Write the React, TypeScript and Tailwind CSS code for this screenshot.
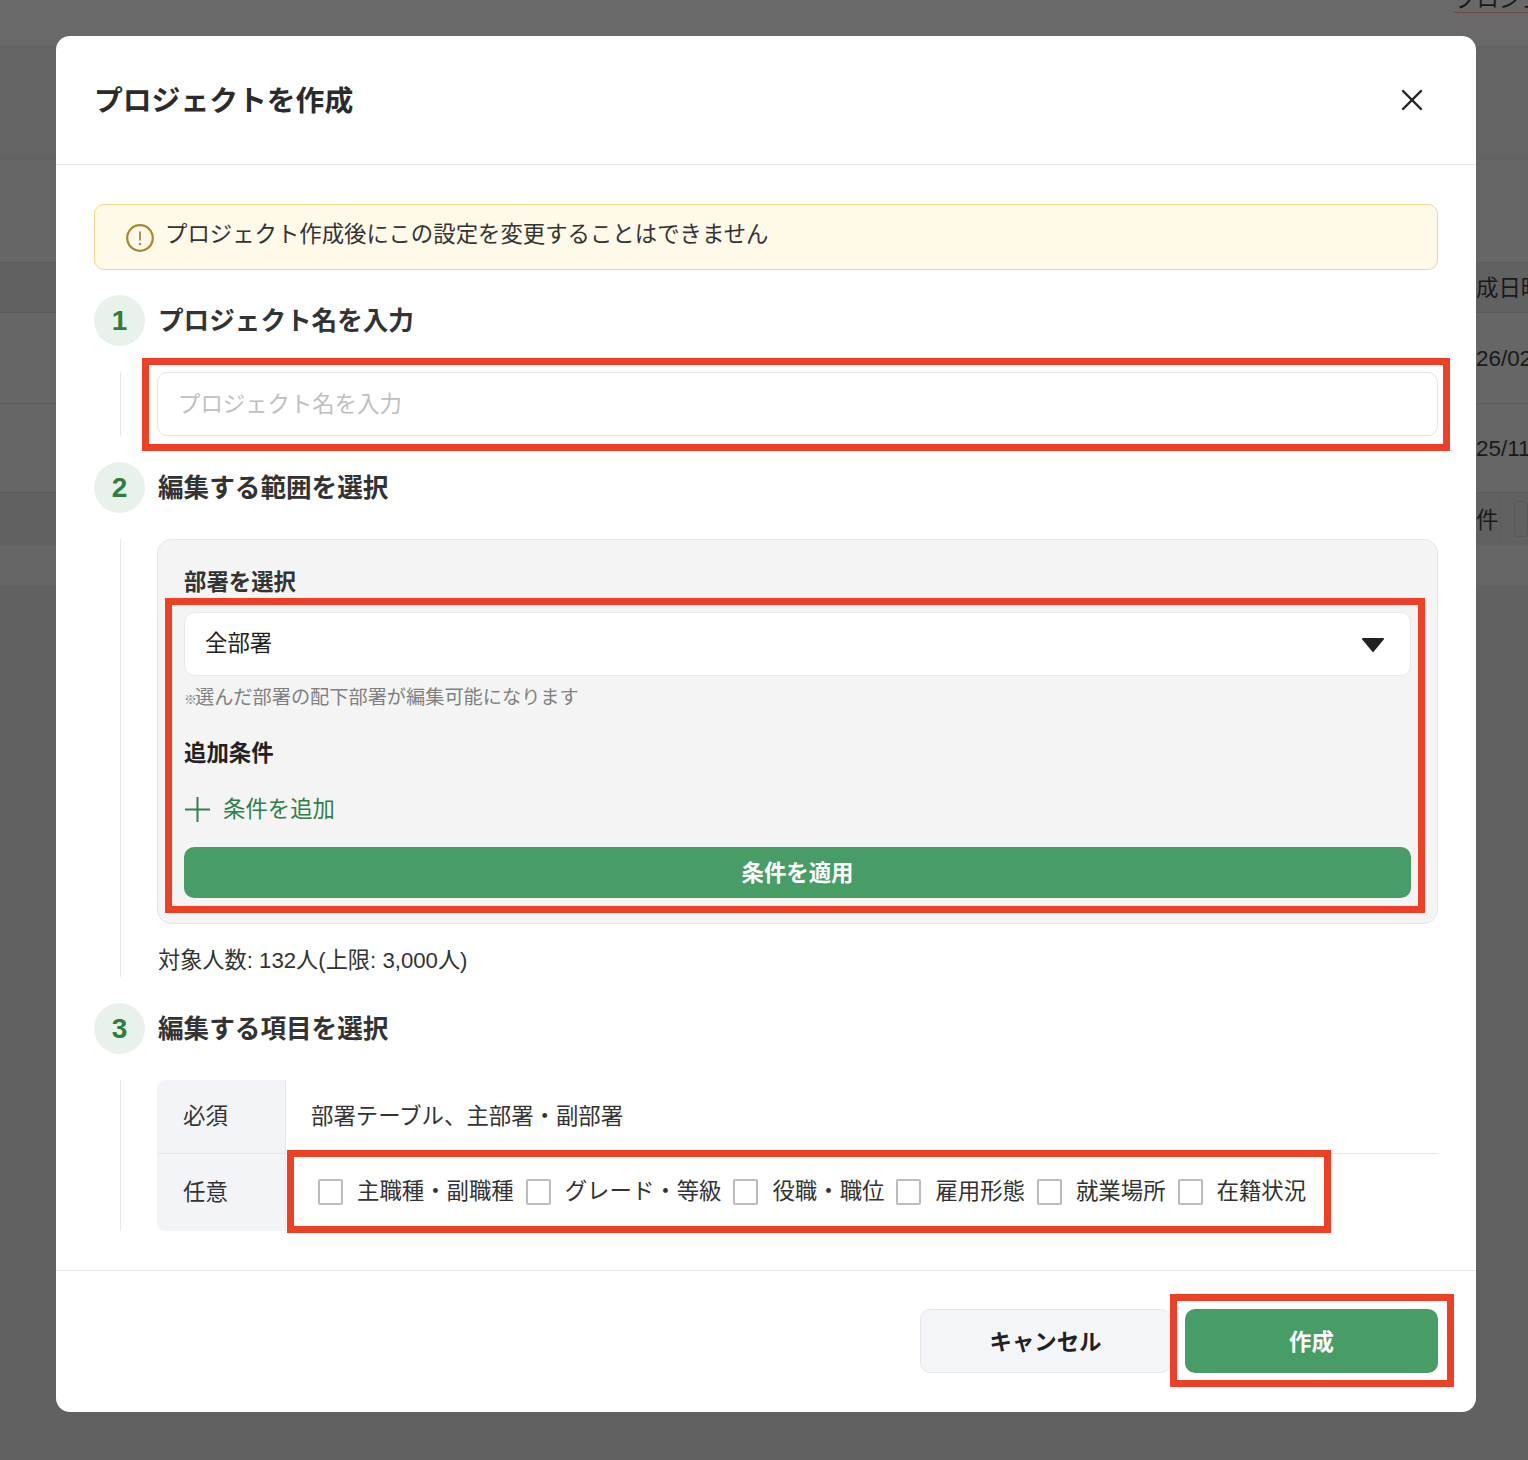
import React from "react";
import { X } from "lucide-react";

const Step = ({ n, title }: { n: number; title: string }) => (
	<div className="flex items-center gap-[13px]">
		<div className="w-[51px] h-[51px] rounded-full bg-[#e8f2ea] flex items-center justify-center text-[#2f7d3b] text-[28px] font-bold">
			{n}
		</div>
		<h2 className="text-[25.6px] leading-[34px] font-bold text-[#333333]">{title}</h2>
	</div>
);

const Check = ({ label }: { label: string }) => (
	<label className="flex items-center gap-[14px]">
		<span className="w-[25px] h-[26px] rounded-[2px] border-2 border-[#bcbcc0] bg-white" />
		<span>{label}</span>
	</label>
);

const Redbox = ({ className }: { className: string }) => (
	<div className={"absolute border-[7px] border-[#ee4027] pointer-events-none " + className} />
);

const App = () => {
	return (
		<div className="relative w-[1528px] h-[1460px] overflow-hidden bg-[#616161] text-[#333333] font-['Liberation_Sans','Noto_Sans_CJK_JP',sans-serif]">
			{/* page behind the overlay */}
			<div className="flex flex-col text-[22.4px] text-[#1a1a1a]">
				<div className="h-[47px] bg-[#696969] border-b border-[#616161] flex justify-end">
					<span className="w-[74px] h-[13px] border-b border-[#6b4a40] overflow-hidden leading-[0px] whitespace-nowrap">プロジェクト</span>
				</div>
				<div className="h-[113px] bg-[#646464] border-b border-[#616161]" />
				<div className="h-[103px] bg-[#666666] border-b border-[#5d5d5d]" />
				<div className="h-[50px] bg-[#616161] border-b border-[#5b5b5b] flex items-center pl-[1476px] pt-[2px] whitespace-nowrap">成日時</div>
				<div className="h-[91px] bg-[#666666] border-b border-[#5b5b5b] flex items-center pl-[1476px] pt-[2px]">26/02</div>
				<div className="h-[89px] bg-[#666666] border-b border-[#5b5b5b] flex items-center pl-[1476px] pt-[2px]">25/11</div>
				<div className="h-[52px] bg-[#616161] flex items-center pl-[1476px]">
					<span className="w-[35px] border-r border-[#5b5b5b] h-[44px] pt-[3px] flex items-center">件</span>
					<span className="ml-[13px] w-[20px] h-[36px] rounded-[4px] border border-[#585858]" />
				</div>
				<div className="h-[40px] bg-[#666666]" />
			</div>

			{/* modal */}
			<div className="absolute left-[56px] top-[36px] w-[1420px] h-[1376px] bg-white rounded-[14px] flex flex-col">
				<div className="h-[129px] shrink-0 border-b border-[#e6e7ea] flex items-center justify-between pl-[38px] pr-[46px]">
					<h1 className="text-[28.8px] font-bold text-[#2b2b2b] pt-[3px]">プロジェクトを作成</h1>
					<X size={36} strokeWidth={1.6} className="text-[#222222]" />
				</div>

				<div className="flex-1 px-[38px] pt-[39px] flex flex-col">
					<div className="h-[66px] rounded-[10px] border border-[#f0d98a] bg-[#fef9e9] flex items-center gap-[11px] pl-[31px]">
						<svg width="28" height="28" viewBox="0 0 28 28" className="mt-[2px]">
							<circle cx="14" cy="14" r="12.8" fill="none" stroke="#a5892c" strokeWidth="2.2" />
							<path d="M14 7.5v9" stroke="#a5892c" strokeWidth="1.8" />
							<circle cx="14" cy="20" r="1.2" fill="#a5892c" />
						</svg>
						<p className="text-[22.4px] text-[#333333] -mt-[5px]">プロジェクト作成後にこの設定を変更することはできません</p>
					</div>

					<div className="mt-[25px]">
						<Step n={1} title="プロジェクト名を入力" />
					</div>
					<div className="mt-[26px] ml-[26px] border-l border-[#e6e7ea] pl-[36px]">
						<div className="h-[64px] rounded-[10px] border border-[#e4e4e6] bg-white flex items-center pl-[20px] pt-[1px] text-[22.4px] text-[#c0c0c0]">
							プロジェクト名を入力
						</div>
					</div>

					<div className="mt-[26px]">
						<Step n={2} title="編集する範囲を選択" />
					</div>
					<div className="mt-[26px] ml-[26px] border-l border-[#e6e7ea] pl-[36px]">
						<div className="h-[385px] rounded-[14px] border border-[#e6e6e6] bg-[#f4f4f4] px-[26px] pt-[28px] flex flex-col">
							<div className="text-[22.4px] leading-[30px] font-bold text-[#333333]">部署を選択</div>
							<div className="mt-[14px] h-[64px] rounded-[10px] border border-[#e8e8e8] bg-white flex items-center justify-between pl-[20px] pr-[26px] text-[22.4px] text-[#222222]">
								<span className="-mt-[1px]">全部署</span>
								<svg width="22" height="14" viewBox="0 0 22 14" className="mt-[1px]">
									<path d="M1 0h20a1 1 0 0 1 .8 1.6L11.8 13.4a1 1 0 0 1-1.6 0L.2 1.6A1 1 0 0 1 1 0z" fill="#222222" />
								</svg>
							</div>
							<div className="mt-[10px] text-[19.2px] leading-[24px] text-[#808080]">
								<span className="inline-block w-[11px] text-[13px]">※</span>選んだ部署の配下部署が編集可能になります
							</div>
							<div className="mt-[27px] text-[22.4px] leading-[30px] font-bold text-[#222222]">追加条件</div>
							<div className="mt-[26px] flex items-center gap-[13px] text-[22.4px] leading-[30px] text-[#2f8048]">
								<svg width="25" height="25" viewBox="0 0 25 25" className="ml-[1px] -mt-[2px]">
									<path d="M12.5 0v25M0 12.5h25" stroke="#2f8048" strokeWidth="2" fill="none" />
								</svg>
								<span>条件を追加</span>
							</div>
							<div className="mt-[22px] h-[51px] pt-[3px] rounded-[10px] bg-[#489d66] flex items-center justify-center text-white text-[22.4px] font-bold">
								条件を適用
							</div>
						</div>
						<div className="mt-[22px] pl-[1px] pb-[1px] text-[22.2px] leading-[30px] text-[#333333]">対象人数: 132人(上限: 3,000人)</div>
					</div>

					<div className="mt-[26px]">
						<Step n={3} title="編集する項目を選択" />
					</div>
					<div className="mt-[26px] ml-[26px] border-l border-[#e6e7ea] pl-[36px] text-[22.4px] text-[#333333]">
						<div className="flex flex-col">
							<div className="flex h-[74px] border-b border-[#e6e7ea]">
								<div className="w-[129px] shrink-0 bg-[#f3f4f8] rounded-tl-[8px] border-r border-[#e6e7ea] flex items-center pl-[26px]">必須</div>
								<div className="flex items-center pl-[25px]">部署テーブル、主部署・副部署</div>
							</div>
							<div className="flex h-[77px]">
								<div className="w-[129px] shrink-0 bg-[#f3f4f8] rounded-bl-[8px] border-r border-[#e6e7ea] flex items-center pl-[26px]">任意</div>
								<div className="flex items-center pl-[32px] pb-[1px] gap-[12px] whitespace-nowrap">
									<Check label="主職種・副職種" />
									<Check label="グレード・等級" />
									<Check label="役職・職位" />
									<Check label="雇用形態" />
									<Check label="就業場所" />
									<Check label="在籍状況" />
								</div>
							</div>
						</div>
					</div>
				</div>

				<div className="h-[142px] shrink-0 border-t border-[#e6e7ea] flex justify-end gap-[14px] pt-[38px] pr-[38px]">
					<button className="w-[251px] h-[64px] rounded-[10px] border border-[#e6e7ea] bg-[#f4f5f9] text-[22.4px] font-bold text-[#222222] pt-[4px]">キャンセル</button>
					<button className="w-[253px] h-[64px] rounded-[10px] bg-[#489d66] text-[22.4px] font-bold text-white pt-[4px]">作成</button>
				</div>
			</div>

			{/* red callouts drawn on top of the capture */}
			<Redbox className="left-[142px] top-[358px] w-[1308px] h-[93px]" />
			<Redbox className="left-[165px] top-[598px] w-[1260px] h-[315px]" />
			<Redbox className="left-[287px] top-[1150px] w-[1044px] h-[83px]" />
			<Redbox className="left-[1170px] top-[1294px] w-[284px] h-[93px]" />
		</div>
	);
};

export default App;
